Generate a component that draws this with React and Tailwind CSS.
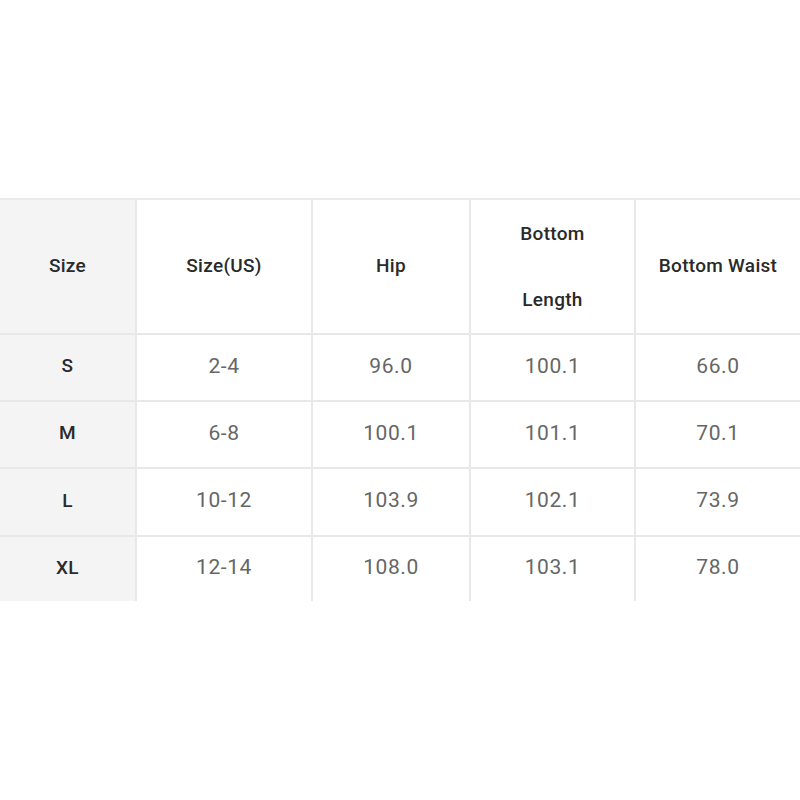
export default function App() {
  const rows = [
    ["S", "2-4", "96.0", "100.1", "66.0"],
    ["M", "6-8", "100.1", "101.1", "70.1"],
    ["L", "10-12", "103.9", "102.1", "73.9"],
    ["XL", "12-14", "108.0", "103.1", "78.0"],
  ];
  const head = "bg-white flex items-center justify-center text-[19px] tracking-[0.3px] font-medium text-[#2a2a2a]";
  const first = "bg-[#f4f4f4] flex items-center justify-center text-[19px] tracking-[0.3px] font-medium text-[#2a2a2a] pb-[2px]";
  return (
    <div className="w-[800px] h-[800px] bg-white" style={{ fontFamily: "Roboto, 'Liberation Sans', sans-serif" }}>
      <div className="pt-[198px]">
        <div className="border-t-2 border-[#ebebeb] grid grid-cols-[135px_174px_156px_163px_1fr] grid-rows-[133px_65px_65px_66px_64px] gap-[2px] bg-[#e8e8e8]">
          <div className="bg-[#f4f4f4] flex items-center justify-center text-[19px] tracking-[0.3px] font-medium text-[#2a2a2a]">Size</div>
          <div className={head}>Size(US)</div>
          <div className={head}>Hip</div>
          <div className="bg-white flex flex-col items-center justify-center text-[19px] tracking-[0.3px] font-medium text-[#2a2a2a] leading-[66px]">
            <span>Bottom</span>
            <span>Length</span>
          </div>
          <div className={head}>Bottom Waist</div>
          {rows.map((r) => [
            <div key={r[0] + "a"} className={first}>{r[0]}</div>,
            ...r.slice(1).map((v, i) => (
              <div key={r[0] + i} className="bg-white flex items-center justify-center text-[21px] tracking-[0.6px] text-[#666666] pb-[2px]">{v}</div>
            )),
          ])}
        </div>
      </div>
    </div>
  );
}
